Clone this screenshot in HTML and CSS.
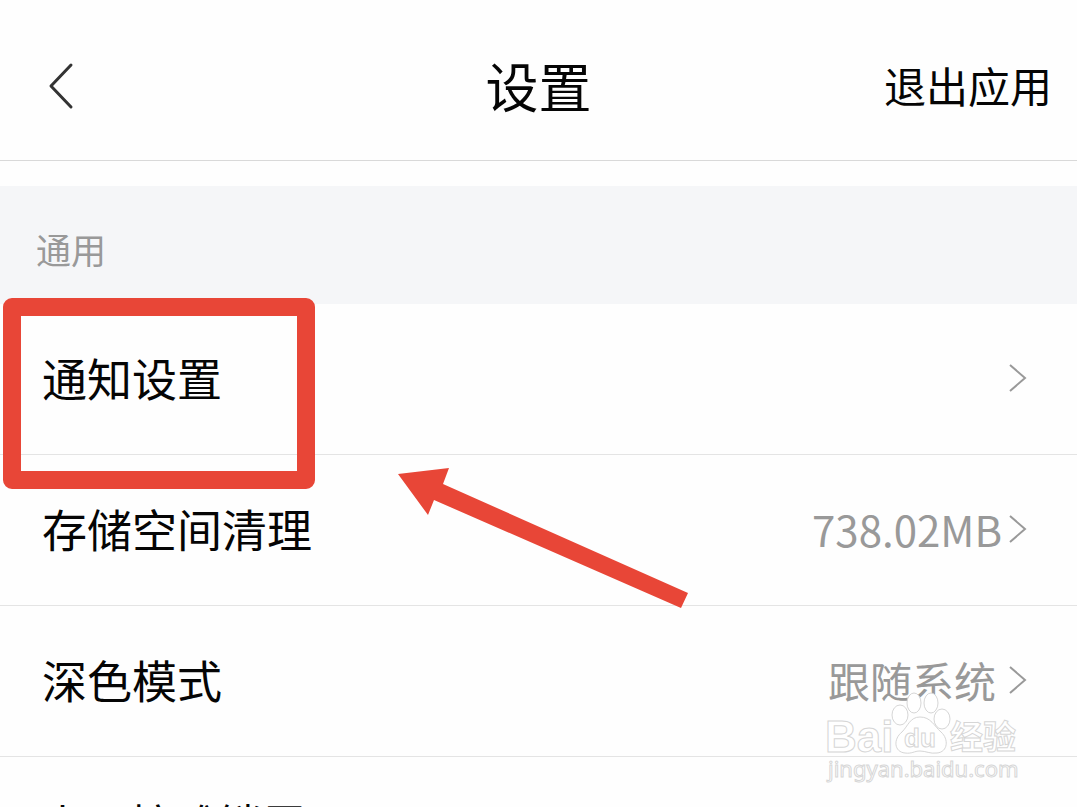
FILE: index.html
```html
<!DOCTYPE html>
<html lang="zh-CN">
<head>
<meta charset="utf-8">
<meta name="viewport" content="width=device-width, initial-scale=1">
<title>设置</title>
<link rel="stylesheet" href="styles.css">
</head>
<body>
<div class="screen">
  <header class="topbar">
    <button class="back" type="button" aria-label="返回">
      <svg width="28" height="48" viewBox="0 0 28 48" aria-hidden="true"><path d="M25 3L5 24l20 21"/></svg>
    </button>
    <h1 class="title">设置</h1>
    <button class="exit" type="button">退出应用</button>
  </header>
  <main>
    <h2 class="section">通用</h2>
    <ul class="list">
      <li><button class="row" type="button"><span class="label">通知设置</span><svg class="chevron" width="20" height="32" viewBox="0 0 20 32" aria-hidden="true"><path d="M2 3l15 13L2 29"/></svg></button></li>
      <li><button class="row" type="button"><span class="label">存储空间清理</span><span class="value">738.02MB</span><svg class="chevron" width="20" height="32" viewBox="0 0 20 32" aria-hidden="true"><path d="M2 3l15 13L2 29"/></svg></button></li>
      <li><button class="row" type="button"><span class="label">深色模式</span><span class="value value-text">跟随系统</span><svg class="chevron" width="20" height="32" viewBox="0 0 20 32" aria-hidden="true"><path d="M2 3l15 13L2 29"/></svg></button></li>
      <li><button class="row row-short" type="button"><span class="label">上日控雅锁屏</span></button></li>
    </ul>
  </main>
  <div class="highlight"></div>
  <svg class="arrow" width="292" height="142" viewBox="398 467 292 142" aria-hidden="true"><path d="M398 474l51-6-6 16 245 109-7 15-247-108-6 15z"/></svg>
  <svg class="watermark" width="200" height="96" viewBox="824 690 200 96" aria-hidden="true">
    <text class="wm-latin" x="825" y="752" font-size="44">Bai</text>
    <g class="paw">
      <ellipse cx="900" cy="715" rx="8" ry="10"/><ellipse cx="914" cy="703" rx="7" ry="10"/><ellipse cx="931" cy="703" rx="7" ry="10"/><ellipse cx="942" cy="719" rx="8" ry="10"/>
      <path d="M920 717c-10 0-12 9-18 15-9 7-8 20 3 21 7 1 9-2 15-2s10 3 17 2c11-1 12-14 4-21-7-6-10-15-21-15z"/>
    </g>
    <text class="wm-latin" x="904" y="747" font-size="26">du</text>
    <text class="wm-cn" x="950" y="749" font-size="33">经验</text>
    <text class="wm-url" x="828" y="777" font-size="22">jingyan.baidu.com</text>
  </svg>
</div>
</body>
</html>
```
FILE: styles.css
```css
* { box-sizing: border-box; }
body {
  margin: 0;
  background: #fefefe;
  color: #050505;
  font-family: "Noto Sans CJK SC", sans-serif;
}
button {
  border: 0;
  padding: 0;
  background: none;
  color: inherit;
  font: inherit;
  cursor: pointer;
}
.screen {
  position: relative;
  height: 100vh;
  overflow: hidden;
}
.topbar {
  display: grid;
  grid-template-columns: 1fr auto 1fr;
  align-items: center;
  height: 161px;
  padding: 10px 25px 0;
  border-bottom: 1px solid #d9d9d9;
}
.back { justify-self: start; padding: 2px 0 0 21px; line-height: 0; }
.back path {
  fill: none;
  stroke: #333;
  stroke-width: 3;
  stroke-linecap: round;
  stroke-linejoin: round;
}
.title {
  margin: 0;
  font-size: 53px;
  font-weight: 400;
  line-height: 60px;
}
.exit { justify-self: end; font-size: 42px; line-height: 60px; }
.section {
  margin: 25px 0 0;
  padding: 40px 36px 32px;
  background: #f5f6f8;
  color: #999;
  font-size: 35px;
  font-weight: 400;
  line-height: 46px;
}
.list { margin: 0; padding: 0; list-style: none; }
.row {
  display: flex;
  align-items: center;
  width: 100%;
  height: 151px;
  padding: 0 49px 2px 42px;
  border-bottom: 1px solid #e4e4e4;
  text-align: left;
}
.label { flex: 1; font-size: 45px; line-height: 60px; }
.row-short { height: 134px; }
.row-short .label { font-size: 44px; }
.value {
  margin-right: 6px;
  color: #999;
  font-size: 42px;
  line-height: 60px;
}
.value-text { margin-right: 12px; }
.chevron path { fill: none; stroke: #999; stroke-width: 2; }
.highlight {
  position: absolute;
  top: 298px;
  left: 3px;
  width: 312px;
  height: 191px;
  border: 18px solid #e84637;
  border-radius: 9px;
  pointer-events: none;
}
.arrow {
  position: absolute;
  top: 467px;
  left: 398px;
  fill: #e84637;
  pointer-events: none;
}
.watermark {
  position: absolute;
  top: 690px;
  right: 53px;
  fill: #fff;
  stroke: #d6d6d6;
  stroke-width: 1;
  pointer-events: none;
}
.wm-latin { font-family: "Liberation Sans", sans-serif; font-weight: 700; }
.wm-cn { font-family: "Noto Sans CJK SC", sans-serif; font-weight: 700; }
.wm-url { font-family: "Noto Sans", sans-serif; }
```
